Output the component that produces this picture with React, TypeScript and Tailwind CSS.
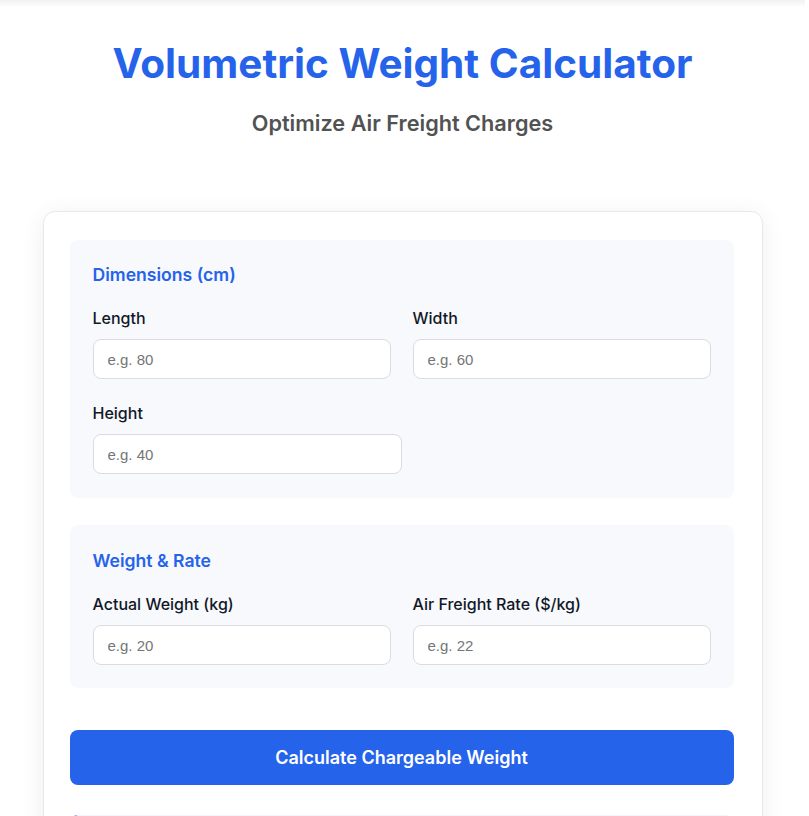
import { useState } from "react";

type Field = { id: string; label: string; placeholder: string; wide?: boolean };

const dimensionFields: Field[] = [
    { id: "length", label: "Length", placeholder: "e.g. 80" },
    { id: "width", label: "Width", placeholder: "e.g. 60" },
    { id: "height", label: "Height", placeholder: "e.g. 40", wide: true },
];

const weightFields: Field[] = [
    { id: "actual", label: "Actual Weight (kg)", placeholder: "e.g. 20" },
    { id: "rate", label: "Air Freight Rate ($/kg)", placeholder: "e.g. 22" },
];

const NumberInput = ({ field, value, onChange }: {
    field: Field,
    value: string,
    onChange: (v: string) => void
}) => {
    return (
        <div className={field.wide ? "col-span-2 w-1/2" : ""}>
            <label htmlFor={field.id} className="block text-[16px] leading-6 font-medium text-[#111827]">
                {field.label}
            </label>
            <input
                id={field.id}
                type="number"
                value={value}
                onChange={(e) => onChange(e.target.value)}
                placeholder={field.placeholder}
                className="mt-[9px] block h-10 w-full rounded-lg border border-[#d9dce1] bg-white px-[14px] font-['Liberation_Sans',Arial,sans-serif] text-[15px] text-[#111827] placeholder:text-[#757575] outline-none focus:border-[#2563eb]"
            />
        </div>
    )
}

const Section = ({ title, fields, values, setValue, pad = "pt-[22px] pb-[24px]" }: {
    title: string,
    fields: Field[],
    values: Record<string, string>,
    setValue: (id: string, v: string) => void,
    pad?: string
}) => {
    return (
        <section className={`rounded-lg bg-[#f8f9fc] px-[23px] ${pad}`}>
            <h2 className="text-[17.6px] leading-[26px] font-semibold text-[#2563eb]">{title}</h2>
            <div className="mt-[18px] grid grid-cols-2 gap-x-[22px] gap-y-[22px]">
                {fields.map((f) => (
                    <NumberInput key={f.id} field={f} value={values[f.id] ?? ""} onChange={(v) => setValue(f.id, v)}/>
                ))}
            </div>
        </section>
    )
}

export default function App() {
    const [values, setValues] = useState<Record<string, string>>({});
    const [result, setResult] = useState<{ volumetric: number, chargeable: number, cost: number } | null>(null);

    const setValue = (id: string, v: string) => setValues((prev) => ({ ...prev, [id]: v }));

    const calculate = () => {
        const l = parseFloat(values.length) || 0;
        const w = parseFloat(values.width) || 0;
        const h = parseFloat(values.height) || 0;
        const actual = parseFloat(values.actual) || 0;
        const rate = parseFloat(values.rate) || 0;
        const volumetric = (l * w * h) / 6000;
        const chargeable = Math.max(volumetric, actual);
        setResult({ volumetric, chargeable, cost: chargeable * rate });
    };

    return (
        <div className="min-h-screen bg-white font-['Inter',sans-serif] pr-[4px] pb-10">
            <div className="h-[7px] bg-gradient-to-b from-[#f1f1f1] to-white"/>
            <header className="pt-[33px] text-center">
                <h1 className="text-[40.5px] leading-[48px] font-bold text-[#2563eb]">Volumetric Weight Calculator</h1>
                <p className="mt-[20px] text-[21.7px] leading-[31px] font-semibold text-[#525252]">Optimize Air Freight Charges</p>
            </header>

            <main className="mx-auto mt-[72px] w-[720px] rounded-xl border border-[#e8e8e8] bg-white pl-[26px] pr-[28px] pt-[28px] pb-[28px] shadow-[0_4px_24px_rgba(0,0,0,0.07)]">
                <Section title="Dimensions (cm)" fields={dimensionFields} values={values} setValue={setValue}/>
                <div className="mt-[27px]">
                    <Section title="Weight & Rate" fields={weightFields} values={values} setValue={setValue} pad="pt-[23px] pb-[23px]"/>
                </div>

                <button
                    type="button"
                    onClick={calculate}
                    className="mt-[42px] flex h-[55px] w-full items-center justify-center rounded-lg bg-[#2563eb] text-[18px] font-semibold text-white hover:bg-[#1d4ed8]"
                >
                    Calculate Chargeable Weight
                </button>

                <div className="mt-[30px] rounded-lg border-l-4 border-[#3b82f6] bg-[#eff6ff] px-5 py-6">
                    <h3 className="text-[16px] font-semibold text-[#1e3a8a]">Result</h3>
                    <div className="mt-2 grid grid-cols-3 gap-4 text-[14px] text-[#374151]">
                        <div>Volumetric: <span className="font-semibold">{result ? result.volumetric.toFixed(2) : "0.00"} kg</span></div>
                        <div>Chargeable: <span className="font-semibold">{result ? result.chargeable.toFixed(2) : "0.00"} kg</span></div>
                        <div>Cost: <span className="font-semibold">${result ? result.cost.toFixed(2) : "0.00"}</span></div>
                    </div>
                </div>
            </main>
        </div>
    )
}
